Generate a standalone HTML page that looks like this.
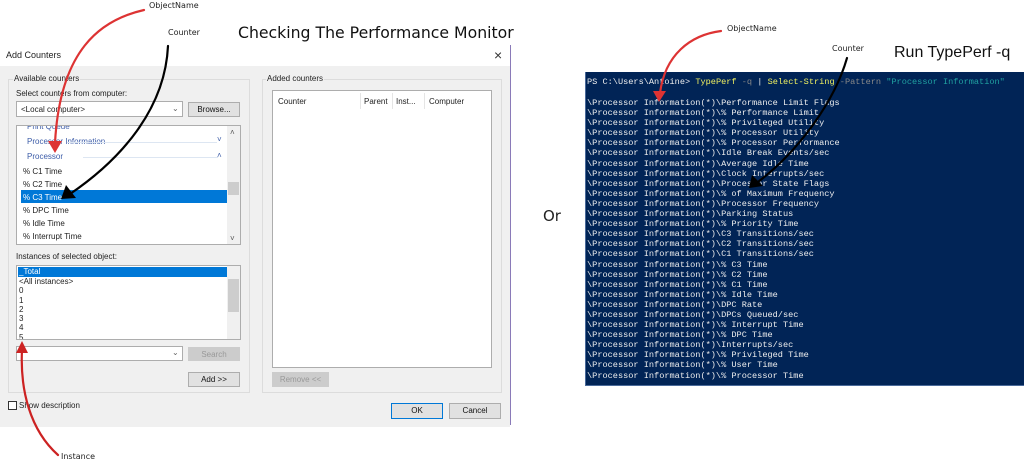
<!DOCTYPE html>
<html><head><meta charset="utf-8"><style>
body{margin:0;width:1024px;height:465px;background:#fff;position:relative;overflow:hidden;font-family:"Liberation Sans",sans-serif;}
.a{position:absolute;white-space:nowrap;}
.s{font-size:8px;color:#222;}
.box{position:absolute;background:#fff;border:1px solid #adadad;box-sizing:border-box;}
.btn{position:absolute;background:#e1e1e1;border:1px solid #adadad;box-sizing:border-box;font-size:8px;text-align:center;line-height:13px;color:#111;}
.grp{position:absolute;border:1px solid #dcdcdc;box-sizing:border-box;}
.term{position:absolute;left:585px;top:72px;width:439px;height:314px;background:#012456;border-left:1px solid #4a6a9a;border-bottom:1px solid #4a6a9a;box-sizing:border-box;}
.term pre{margin:0;position:absolute;left:1px;font-family:"Liberation Mono",monospace;font-size:8.6px;line-height:10.1px;color:#eee;}
.hand{font-family:"DejaVu Sans",sans-serif;}
</style></head><body>
<div class="a hand" style="left:149px;top:1px;font-size:8px;color:#222">ObjectName</div>
<div class="a hand" style="left:168px;top:28px;font-size:8px;color:#222">Counter</div>
<div class="a hand" style="left:238px;top:23px;font-size:15.7px;color:#111">Checking The Performance Monitor</div>

<div class="a" style="left:0;top:45px;width:510px;height:21px;background:#fff"></div>
<div class="a s" style="left:6px;top:50px;font-size:9px">Add Counters</div>
<div class="a" style="left:494px;top:47px;font-size:14px;color:#333">×</div>
<div class="a" style="left:0;top:66px;width:510px;height:361px;background:#f0f0f0"></div>
<div class="a" style="left:510px;top:45px;width:1px;height:380px;background:#8a7ab8"></div>

<div class="grp" style="left:8px;top:79px;width:242px;height:314px"></div>
<div class="a s" style="left:13px;top:74px;background:#f0f0f0;padding:0 1px">Available counters</div>
<div class="a s" style="left:16px;top:89px">Select counters from computer:</div>
<div class="box" style="left:16px;top:101px;width:167px;height:16px"><span class="a s" style="left:4px;top:3px">&lt;Local computer&gt;</span><span class="a s" style="left:155px;top:2px;color:#666">⌄</span></div>
<div class="btn" style="left:188px;top:102px;width:52px;height:15px">Browse...</div>

<div class="box" style="left:16px;top:125px;width:225px;height:120px;overflow:hidden">
 <div class="a" style="left:210px;top:0;width:14px;height:119px;background:#f0f0f0"></div>
 <div class="a" style="left:211px;top:56px;width:11px;height:13px;background:#cdcdcd"></div>
 <div class="a s" style="left:213px;top:2px;color:#555">˄</div>
 <div class="a s" style="left:213px;top:108px;color:#555">˅</div>
 <div class="a s" style="left:10px;top:-4px;color:#3c5ca8">Print Queue</div>
 <div class="a s" style="left:10px;top:11px;color:#3c5ca8">Processor Information</div>
 <div class="a" style="left:50px;top:16px;width:150px;height:1px;background:#dde6f2"></div>
 <div class="a s" style="left:10px;top:26px;color:#3c5ca8">Processor</div>
 <div class="a" style="left:66px;top:31px;width:135px;height:1px;background:#dde6f2"></div>
 <div class="a s" style="left:200px;top:9px;color:#3c5ca8">˅</div>
 <div class="a s" style="left:200px;top:25px;color:#3c5ca8">˄</div>
 <div class="a s" style="left:6px;top:41px">% C1 Time</div>
 <div class="a s" style="left:6px;top:54px">% C2 Time</div>
 <div class="a" style="left:4px;top:64px;width:206px;height:13px;background:#0078d7"></div>
 <div class="a s" style="left:6px;top:67px;color:#fff">% C3 Time</div>
 <div class="a s" style="left:6px;top:80px">% DPC Time</div>
 <div class="a s" style="left:6px;top:93px">% Idle Time</div>
 <div class="a s" style="left:6px;top:106px">% Interrupt Time</div>
</div>

<div class="a s" style="left:16px;top:252px">Instances of selected object:</div>
<div class="box" style="left:16px;top:265px;width:225px;height:75px;overflow:hidden;line-height:9.3px">
 <div class="a" style="left:210px;top:0;width:14px;height:74px;background:#f0f0f0"></div>
 <div class="a" style="left:211px;top:13px;width:11px;height:33px;background:#cdcdcd"></div>
 <div class="a" style="left:1px;top:1px;width:209px;height:10px;background:#0078d7"></div>
 <div class="a s" style="left:2px;top:1px;line-height:10px;color:#fff">_Total</div>
 <div class="a s" style="left:2px;top:11px">&lt;All instances&gt;<br>0<br>1<br>2<br>3<br>4<br>5</div>
</div>
<div class="box" style="left:16px;top:346px;width:167px;height:15px"><span class="a s" style="left:155px;top:1px;color:#666">⌄</span></div>
<div class="btn" style="left:188px;top:347px;width:52px;height:14px;color:#999;background:#ccc;border-color:#ccc">Search</div>
<div class="btn" style="left:188px;top:372px;width:52px;height:15px">Add &gt;&gt;</div>

<div class="grp" style="left:262px;top:79px;width:240px;height:314px"></div>
<div class="a s" style="left:266px;top:74px;background:#f0f0f0;padding:0 1px">Added counters</div>
<div class="box" style="left:272px;top:90px;width:220px;height:278px">
 <div class="a s" style="left:5px;top:6px">Counter</div>
 <div class="a" style="left:87px;top:2px;width:1px;height:16px;background:#e5e5e5"></div>
 <div class="a s" style="left:91px;top:6px">Parent</div>
 <div class="a" style="left:119px;top:2px;width:1px;height:16px;background:#e5e5e5"></div>
 <div class="a s" style="left:123px;top:6px">Inst...</div>
 <div class="a" style="left:151px;top:2px;width:1px;height:16px;background:#e5e5e5"></div>
 <div class="a s" style="left:156px;top:6px">Computer</div>
</div>
<div class="btn" style="left:272px;top:372px;width:57px;height:15px;color:#999;background:#ccc;border-color:#ccc">Remove &lt;&lt;</div>

<div class="a" style="left:8px;top:401px;width:9px;height:9px;border:1px solid #333;background:#fff;box-sizing:border-box"></div>
<div class="a s" style="left:19px;top:401px">Show description</div>
<div class="btn" style="left:391px;top:403px;width:52px;height:16px;border:1px solid #0078d7;line-height:14px">OK</div>
<div class="btn" style="left:449px;top:403px;width:52px;height:16px;line-height:14px">Cancel</div>

<div class="a hand" style="left:61px;top:452px;font-size:8px;color:#222">Instance</div>
<div class="a hand" style="left:543px;top:207px;font-size:15px;color:#222">Or</div>

<div class="a hand" style="left:727px;top:24px;font-size:8px;color:#222">ObjectName</div>
<div class="a hand" style="left:832px;top:44px;font-size:8px;color:#222">Counter</div>
<div class="a" style="left:894px;top:44px;font-size:16px;color:#111">Run TypePerf -q</div>
<div class="term">
<pre style="top:5px">PS C:\Users\Antoine&gt; <span style="color:#f0f060">TypePerf</span> <span style="color:#888">-q</span> | <span style="color:#f0f060">Select-String</span> <span style="color:#888">-Pattern</span> <span style="color:#20a0a0">"Processor Information"</span></pre>
<pre style="top:26px">\Processor Information(*)\Performance Limit Flags
\Processor Information(*)\% Performance Limit
\Processor Information(*)\% Privileged Utility
\Processor Information(*)\% Processor Utility
\Processor Information(*)\% Processor Performance
\Processor Information(*)\Idle Break Events/sec
\Processor Information(*)\Average Idle Time
\Processor Information(*)\Clock Interrupts/sec
\Processor Information(*)\Processor State Flags
\Processor Information(*)\% of Maximum Frequency
\Processor Information(*)\Processor Frequency
\Processor Information(*)\Parking Status
\Processor Information(*)\% Priority Time
\Processor Information(*)\C3 Transitions/sec
\Processor Information(*)\C2 Transitions/sec
\Processor Information(*)\C1 Transitions/sec
\Processor Information(*)\% C3 Time
\Processor Information(*)\% C2 Time
\Processor Information(*)\% C1 Time
\Processor Information(*)\% Idle Time
\Processor Information(*)\DPC Rate
\Processor Information(*)\DPCs Queued/sec
\Processor Information(*)\% Interrupt Time
\Processor Information(*)\% DPC Time
\Processor Information(*)\Interrupts/sec
\Processor Information(*)\% Privileged Time
\Processor Information(*)\% User Time
\Processor Information(*)\% Processor Time</pre>
</div>

<svg class="a" style="left:0;top:0" width="1024" height="465">
 <g fill="none" stroke-width="2.2" stroke-linecap="round">
  <path d="M144 10 C100 20 60 50 55 143" stroke="#d33"/>
  <path d="M168 46 C165 110 120 160 70 194" stroke="#000"/>
  <path d="M58 455 C30 430 20 390 22 350" stroke="#c22"/>
  <path d="M721 31 C690 35 665 55 660 93" stroke="#d33"/>
  <path d="M847 58 C835 100 800 150 758 182" stroke="#000"/>
 </g>
 <polygon points="48,141 62,141 55,153" fill="#d33"/>
 <polygon points="66,185 76,198 61,199" fill="#000"/>
 <polygon points="16,353 28,353 22,341" fill="#c22"/>
 <polygon points="653,91 666,91 659,102" fill="#d33"/>
 <polygon points="752,175 763,186 749,188" fill="#000"/>
</svg>
</body></html>
